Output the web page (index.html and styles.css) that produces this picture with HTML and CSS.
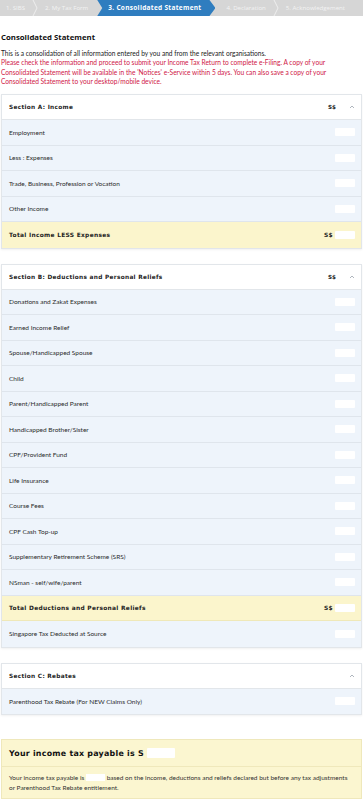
FILE: index.html
```html
<!DOCTYPE html>
<html lang="en">
<head>
    <meta charset="UTF-8">
    <title>Consolidated Statement</title>
    <link rel="stylesheet" href="styles.css">
</head>
<body>
<!--步骤条-->
<div class="steps">
    <div class="step">1. SIBS</div>
    <svg class="sep" viewBox="0 0 6 16"><polyline points="1,0 5,8 1,16" fill="none" stroke="#f4f4f4" stroke-width="0.8"/></svg>
    <div class="step">2. My Tax Form</div>
    <div class="step active">3. Consolidated Statement</div>
    <div class="step">4. Declaration</div>
    <svg class="sep" viewBox="0 0 6 16"><polyline points="1,0 5,8 1,16" fill="none" stroke="#f4f4f4" stroke-width="0.8"/></svg>
    <div class="step">5. Acknowledgement</div>
</div>

<div class="page">
    <h1 class="title">Consolidated Statement</h1>
    <p class="intro">This is a consolidation of all information entered by you and from the relevant organisations.<br>
        <span class="red">Please check the information and proceed to submit your Income Tax Return to complete e-Filing. A copy of your Consolidated Statement will be available in the 'Notices' e-Service within 5 days. You can also save a copy of your Consolidated Statement to your desktop/mobile device.</span></p>

    <!--Section A-->
    <div class="card">
        <div class="head">
            <span class="name">Section A: Income</span>
            <span class="cur">S$</span>
            <svg class="caret" viewBox="0 0 6 4"><polyline points="1,3 3,1 5,3" fill="none" stroke="#9aa3ad" stroke-width="0.8"/></svg>
        </div>
        <div class="row"><span>Employment</span><i class="hide"></i></div>
        <div class="row"><span>Less : Expenses</span><i class="hide"></i></div>
        <div class="row"><span>Trade, Business, Profession or Vocation</span><i class="hide"></i></div>
        <div class="row"><span>Other Income</span><i class="hide"></i></div>
        <div class="row total"><span>Total Income LESS Expenses</span><b>S$</b><i class="hide"></i></div>
    </div>

    <!--Section B-->
    <div class="card">
        <div class="head">
            <span class="name">Section B: Deductions and Personal Reliefs</span>
            <span class="cur">S$</span>
            <svg class="caret" viewBox="0 0 6 4"><polyline points="1,3 3,1 5,3" fill="none" stroke="#9aa3ad" stroke-width="0.8"/></svg>
        </div>
        <div class="row"><span>Donations and Zakat Expenses</span><i class="hide"></i></div>
        <div class="row"><span>Earned Income Relief</span><i class="hide"></i></div>
        <div class="row"><span>Spouse/Handicapped Spouse</span><i class="hide"></i></div>
        <div class="row"><span>Child</span><i class="hide"></i></div>
        <div class="row"><span>Parent/Handicapped Parent</span><i class="hide"></i></div>
        <div class="row"><span>Handicapped Brother/Sister</span><i class="hide"></i></div>
        <div class="row"><span>CPF/Provident Fund</span><i class="hide"></i></div>
        <div class="row"><span>Life Insurance</span><i class="hide"></i></div>
        <div class="row"><span>Course Fees</span><i class="hide"></i></div>
        <div class="row"><span>CPF Cash Top-up</span><i class="hide"></i></div>
        <div class="row"><span>Supplementary Retirement Scheme (SRS)</span><i class="hide"></i></div>
        <div class="row"><span>NSman - self/wife/parent</span><i class="hide"></i></div>
        <div class="row total"><span>Total Deductions and Personal Reliefs</span><b>S$</b><i class="hide"></i></div>
        <div class="row"><span>Singapore Tax Deducted at Source</span><i class="hide"></i></div>
    </div>

    <!--Section C-->
    <div class="card">
        <div class="head">
            <span class="name">Section C: Rebates</span>
            <svg class="caret" viewBox="0 0 6 4"><polyline points="1,3 3,1 5,3" fill="none" stroke="#9aa3ad" stroke-width="0.8"/></svg>
        </div>
        <div class="row"><span>Parenthood Tax Rebate (For NEW Claims Only)</span><i class="hide"></i></div>
    </div>

    <!--应缴税额-->
    <div class="payable">
        <div class="pay-head">Your income tax payable is S<i class="hide big"></i></div>
        <p class="pay-text">Your income tax payable is <span class="gap"></span> based on the income, deductions and reliefs declared but before any tax adjustments<br>
            <span>or Parenthood Tax Rebate entitlement.</span></p>
    </div>
</div>
</body>
</html>
```

FILE: styles.css
```css
* {
    margin: 0;
    padding: 0;
    border: 0;
    box-sizing: border-box;
}

body {
    background: #fff;
    font-family: Lato, "Open Sans", sans-serif;
    color: #333;
}

.steps {
    display: flex;
    align-items: center;
    height: 16px;
    background: #d6d6d6;
    overflow: hidden;
}

.step {
    font-family: "Open Sans", sans-serif;
    font-size: 6.1px;
    color: #f3f3f3;
    padding: 0 7px;
    white-space: nowrap;
    line-height: 16px;
}

.step.active {
    background: #2f7dbf;
    color: #fff;
    font-weight: 700;
    font-size: 6.5px;
    letter-spacing: 0.3px;
    padding: 0 14px 0 11px;
    margin-left: 2px;
    margin-right: 4px;
    clip-path: polygon(0 0, calc(100% - 6px) 0, 100% 50%, calc(100% - 6px) 100%, 0 100%, 5px 50%);
}

.step:first-child {
    padding-left: 6px;
}

.sep {
    width: 6px;
    height: 16px;
    flex: none;
}

.page {
    padding: 0 1px;
}

.title {
    font-family: "Open Sans", sans-serif;
    font-size: 7.8px;
    font-weight: 700;
    color: #111;
    margin-top: 16px;
    line-height: 10px;
}

.intro {
    font-size: 6.6px;
    line-height: 9.3px;
    color: #222;
    margin-top: 7px;
}

.red {
    color: #cf1746;
}

.card {
    border: 1px solid #e2e6ea;
    box-shadow: 0 1px 2px rgba(0, 0, 0, 0.06);
    margin-top: 15px;
}

.card:first-of-type {
    margin-top: 8px;
}

.head {
    display: flex;
    align-items: center;
    height: 25px;
    padding: 0 6px 0 7px;
    background: #fff;
    border-bottom: 1px solid #e2e6ea;
}

.name {
    flex: 1;
    font-family: "DejaVu Sans", sans-serif;
    font-weight: 700;
    font-size: 5.8px;
    letter-spacing: 0.3px;
    color: #222;
}

.cur {
    font-family: "DejaVu Sans", sans-serif;
    font-weight: 700;
    font-size: 5.6px;
    color: #222;
    margin-right: 13px;
}

.caret {
    width: 6px;
    height: 4px;
}

.row {
    display: flex;
    align-items: center;
    height: 25.5px;
    padding: 0 6px 0 7px;
    background: #eef4fb;
    border-bottom: 1px solid #dfe5ec;
    font-size: 6.5px;
    color: #2c2c2c;
}

.row:last-child {
    border-bottom: 0;
}

.row span {
    flex: 1;
}

.total {
    background: #fbf5cc;
    border-bottom: 1px solid #efe8b8;
}

.total span,
.total b {
    font-family: "DejaVu Sans", sans-serif;
    font-weight: 700;
    font-size: 5.9px;
    letter-spacing: 0.3px;
    color: #222;
}

.total b {
    margin-right: 2px;
}

.hide {
    display: block;
    width: 20px;
    height: 8px;
    background: #fff;
    border-radius: 1px;
}

.payable {
    margin-top: 24px;
    background: #fbf6d0;
    border: 1px solid #efe8bb;
}

.pay-head {
    display: flex;
    align-items: center;
    height: 27px;
    padding: 0 7px;
    font-family: "DejaVu Sans", sans-serif;
    font-weight: 700;
    font-size: 7.9px;
    letter-spacing: 0.25px;
    color: #111;
    border-bottom: 1px solid #efe8bb;
}

.hide.big {
    width: 28px;
    height: 10px;
    margin-left: 3px;
}

.pay-text {
    font-size: 6.5px;
    line-height: 10px;
    color: #333;
    padding: 6px 6px 5px 7px;
}

.gap {
    display: inline-block;
    width: 19px;
    height: 7px;
    background: #fff;
    vertical-align: -1px;
}
```
